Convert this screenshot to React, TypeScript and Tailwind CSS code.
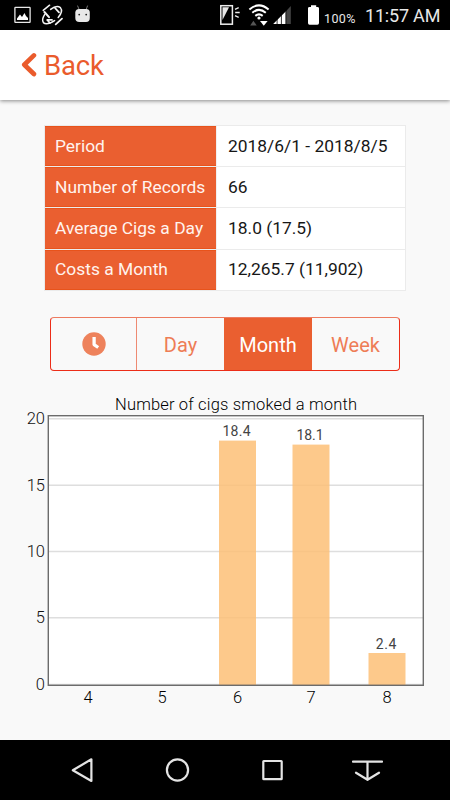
import React from 'react';

const rows = [
  { label: 'Period', value: '2018/6/1 - 2018/8/5' },
  { label: 'Number of Records', value: '66' },
  { label: 'Average Cigs a Day', value: '18.0 (17.5)' },
  { label: 'Costs a Month', value: '12,265.7 (11,902)' },
];

const ticks = [
  { label: '20', y: 418.7 },
  { label: '15', y: 485.3 },
  { label: '10', y: 551.5 },
  { label: '5', y: 617.7 },
  { label: '0', y: 684.5 },
];

const months = [
  { label: '4', x: 88 },
  { label: '5', x: 162 },
  { label: '6', x: 237.5, value: '18.4', top: 440.6, width: 28 },
  { label: '7', x: 311, value: '18.1', top: 444.6, width: 27 },
  { label: '8', x: 387, value: '2.4', top: 653, width: 20.5 },
];

function StatusBar() {
  return (
    <div className="flex h-[30px] shrink-0 items-center justify-between bg-black text-[#e8e8e8]">
      <div className="flex h-[30px]">
        <svg width="100" height="30" viewBox="0 0 100 30" fill="none">
          <rect x="14.9" y="7.4" width="15.2" height="15" rx="0.5" stroke="#e8e8e8" strokeWidth="1.3" />
          <path d="M17 20V18.5L20 14.5L22 17L24.5 13L26 16L28 18V20Z" fill="#fff" />
          <g stroke="#f4f4f4" strokeWidth="1.5" strokeLinecap="round" strokeLinejoin="round">
            <path d="M43.2 10.4L49.6 5.2" />
            <path d="M44.4 12L49 17.2" strokeWidth="2" />
            <path d="M50.6 9.4Q56.6 4.6 60.4 7.6Q63.4 11.4 58.2 17.4" />
            <path d="M55 8L59 12.4" strokeWidth="1.8" />
            <path d="M55.7 24.3L62 18.6" strokeWidth="1.8" />
            <path d="M44.6 14.6Q41.4 19.6 43.4 22.6Q46.6 25.6 54.6 20.6" />
            <path d="M47.2 19.9H52M47.4 20L49.8 23" strokeWidth="1.8" />
          </g>
          <path d="M77.5 5.6L79 9.2M87.6 5.6L86.3 9.2" stroke="#777" />
          <path d="M75.3 12Q76 9.1 79 9.1H86.2Q89.4 9.1 89.8 12V18Q89.8 22 86 22H79.3Q75.3 22 75.3 18Z" fill="#e8e8e8" />
          <circle cx="79.2" cy="14.6" r="0.9" fill="#222" />
          <circle cx="86.2" cy="14.6" r="0.9" fill="#222" />
        </svg>
      </div>
      <div className="flex h-[30px]">
        <svg width="122" height="30" viewBox="200 0 122 30" fill="none">
          <rect x="220.8" y="5.7" width="11.6" height="18.5" stroke="#eee" strokeWidth="1.5" />
          <path d="M222.5 7.3H229L222.5 20Z" fill="#e8e8e8" />
          <path d="M235 9.3L238.7 7.6M235.2 12.5H239.7M235 15.6L238.7 17.4" stroke="#eee" strokeWidth="1.3" />
          <path d="M249.4 9.5Q259 1.2 268.6 9.5M252.3 12.8Q259 7 265.8 12.8M255.3 15.9Q259 12.9 262.7 15.9" stroke="#fff" strokeWidth="2" />
          <circle cx="259" cy="18" r="1.6" fill="#fff" />
          <path d="M250.2 25.5L253.4 20.7L256.7 25.5Z" fill="#555" />
          <path d="M260 21.1H267.6L263.8 25.7Z" fill="#fff" />
          <path d="M273.2 24L286.2 11V24Z" fill="#fff" />
          <path d="M286.2 11L290.8 6V24H286.2Z" fill="#444" />
          <path d="M277.1 18V24M281.4 14V24M285.8 10V24" stroke="#000" strokeWidth=".8" />
          <path d="M308 8.2Q308 7 309.5 7H311V5.2H316.2V7H317.4Q319 7 319 8.2V23Q319 24.7 317.4 24.7H309.5Q308 24.7 308 23Z" fill="#fff" />
        </svg>
        <span className="mt-[11px] ml-[2px] w-[34px] text-[12.5px] leading-[16px] tracking-[.4px]">100%</span>
        <span className="mt-[5px] ml-[7px] w-[85px] text-[18px] leading-[22px] tracking-[-.2px] whitespace-nowrap">11:57 AM</span>
      </div>
    </div>
  );
}

function Chart() {
  return (
    <svg className="block font-light" width="450" height="350" viewBox="0 390 450 350" fontFamily="Roboto, sans-serif">
      <text x="115" y="410.3" fontSize="16.5" fill="#000" textLength="242">Number of cigs smoked a month</text>
      <rect x="48.3" y="415.7" width="375" height="269.6" fill="#fff" />
      {ticks.map((t) => (
        <g key={t.label}>
          <line x1="49" x2="423" y1={t.y} y2={t.y} stroke="#dedede" strokeWidth="1.4" />
          <text x="45" y={t.y + 5.2} fontSize="16.5" textAnchor="end" fill="#111">{t.label}</text>
        </g>
      ))}
      {months.map((m) => (
        <g key={m.label}>
          {m.top && (
            <>
              <rect x={m.x - 18.5} y={m.top} width="37" height={685 - m.top} fill="#fdbf75" fillOpacity=".84" />
              <text className="font-normal" x={m.x - 1 - (m.width ?? 0) / 2} y={m.top - 4.4} fontSize="14" fill="#444" textLength={m.width}>{m.value}</text>
            </>
          )}
          <text x={m.x} y="702.7" fontSize="16.5" textAnchor="middle" fill="#000">{m.label}</text>
        </g>
      ))}
      <rect x="48.3" y="415.7" width="375" height="269.6" fill="none" stroke="#6c6c6c" strokeWidth="1.4" />
    </svg>
  );
}

export default function App() {
  return (
    <div className="flex h-[800px] w-[450px] flex-col overflow-hidden bg-[#f9f9f9] font-[Roboto,sans-serif]">
      <StatusBar />
      <header className="z-10 flex h-[70px] shrink-0 items-center bg-white pl-[21px] text-[#ea5b2c] shadow-[0_1px_4px_rgba(0,0,0,.45)]">
        <svg width="16" height="26" viewBox="0 0 16 26" fill="none">
          <path d="M12.9 3.4L3.3 12.7L12.9 22" stroke="#ea5b2c" strokeWidth="4.7" strokeLinecap="round" strokeLinejoin="round" />
        </svg>
        <span className="mt-[2px] ml-[7px] text-[27.5px] leading-[32px] tracking-[-.2px]">Back</span>
      </header>

      <main className="flex flex-1 flex-col">
        <div className="mt-[25px] ml-[44px] flex w-[362px] flex-col border border-[#ebebeb] text-[17.4px]">
          {rows.map((r) => (
            <div key={r.label} className="flex h-[41.2px] border-b border-[#ebebeb] last:h-[40.4px] last:border-b-0">
              <div className="flex w-[171px] items-center border-y border-[#e8531b] bg-[#ea5f30] pb-px pl-[10px] text-[#fff3ee]">{r.label}</div>
              <div className="flex flex-1 items-center border-l border-[#f0f0f0] bg-white pb-px pl-[11px] text-[#161616]">{r.value}</div>
            </div>
          ))}
        </div>

        <div className="mt-[26px] ml-[50px] flex h-[54px] w-[350px] overflow-hidden rounded-[4px] border border-[#ec2d18] border-t-[#ed7b60] text-[20px] text-[#ee7d56]">
          <div className="flex w-[86px] items-center justify-center border-r border-[#ee8a72]">
            <svg width="24" height="24" viewBox="0 0 24 24">
              <circle cx="12" cy="12" r="11.7" fill="#ee825c" />
              <path d="M12.1 4.9V12.6L16.2 15.5" stroke="#fff" strokeWidth="3.3" fill="none" strokeLinejoin="round" />
            </svg>
          </div>
          <div className="flex w-[87px] items-center justify-center pt-[2px]">Day</div>
          <div className="flex w-[88px] items-center justify-center bg-[#ea5f30] pt-[2px] text-white">Month</div>
          <div className="flex flex-1 items-center justify-center pt-[2px]">Week</div>
        </div>

        <div className="mt-[19px] h-[350px]">
          <Chart />
        </div>
      </main>

      <nav className="flex h-[60px] shrink-0 bg-black">
        <svg width="450" height="60" viewBox="0 740 450 60" fill="none" stroke="#e4e4e4" strokeWidth="2.2" strokeLinejoin="round" strokeLinecap="round">
          <path d="M72.8 770.2L91.4 759.3V781Z" />
          <circle cx="177.5" cy="770" r="10.6" />
          <rect x="263.3" y="761" width="18.4" height="18.2" rx=".5" />
          <path d="M353 761.7H382M367.5 762V780M356 772.7L367.5 779.7L379 772.7" />
        </svg>
      </nav>
    </div>
  );
}
